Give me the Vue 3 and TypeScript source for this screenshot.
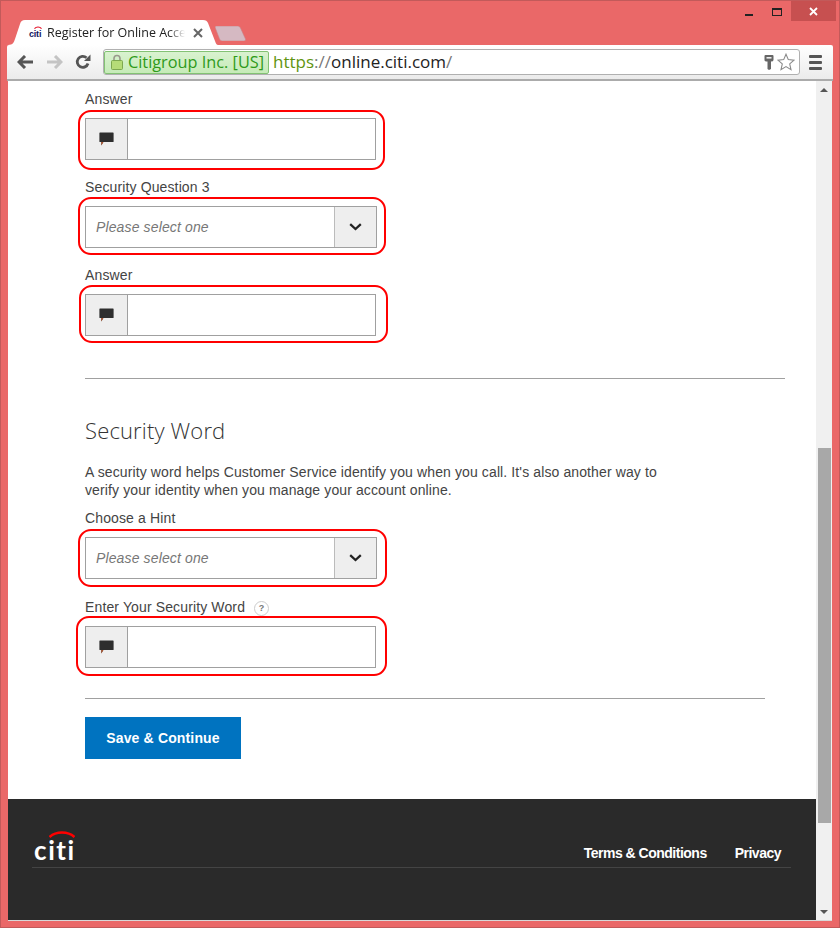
<script setup lang="ts">
interface Field {
  label: string
  kind: 'text' | 'select'
  ring: string
  help?: boolean
}
const upper: Field[] = [
  { label: 'Answer', kind: 'text', ring: 'ring-a' },
  { label: 'Security Question 3', kind: 'select', ring: 'ring-b' },
  { label: 'Answer', kind: 'text', ring: 'ring-c' },
]
const lower: Field[] = [
  { label: 'Choose a Hint', kind: 'select', ring: 'ring-d' },
  { label: 'Enter Your Security Word', kind: 'text', ring: 'ring-e', help: true },
]
</script>

<template>
  <div class="window">
    <div class="titlebar">
      <div class="tab">
        <svg class="tab-shape" width="210" height="25" viewBox="0 0 210 25"><path d="M0 25 C5 25 6 22 7 19 L12 4 C13 1 14 0 17 0 L195 0 C198 0 199 1 200 3 L207 21 C208 24 209 25 210 25 Z" fill="#fff"/></svg>
        <span class="favicon"><svg class="fav-arc" width="8" height="3" viewBox="0 0 8 3"><path d="M0.5 2.6 C2.5 0.4 5.5 0.4 7.5 2.6" fill="none" stroke="#e2001a" stroke-width="1.1"/></svg>citi</span>
        <span class="tab-title">Register for Online Acce</span>
        <svg class="tab-close" width="10" height="10" viewBox="0 0 10 10"><path d="M1 1 L9 9 M9 1 L1 9" stroke="#666" stroke-width="2"/></svg>
      </div>
      <svg class="newtab" width="31" height="15" viewBox="0 0 31 15"><path d="M1 0 H23 C24 0 25 1 25.5 2 L30.5 13 C31 14 30 15 29 15 H7 C6 15 5 14 4.5 13 L0.3 2 C0 1 0 0 1 0 Z" fill="#d5b9c2" stroke="#cd7f85" stroke-width="0.6"/></svg>
      <div class="controls">
        <span class="ctl"><i class="ctl-min"></i></span>
        <span class="ctl"><i class="ctl-max"></i></span>
        <span class="ctl ctl-close"><svg width="9" height="9" viewBox="0 0 9 9"><path d="M1 1 L8 8 M8 1 L1 8" stroke="#fff" stroke-width="1.8"/></svg></span>
      </div>
    </div>

    <div class="toolbar">
      <svg class="nav nav-back" width="17" height="14" viewBox="0 0 17 14"><path d="M8 1 L2 7 L8 13 M2 7 H16" fill="none" stroke="#555" stroke-width="3"/></svg>
      <svg class="nav nav-fwd" width="17" height="14" viewBox="0 0 17 14"><path d="M9 1 L15 7 L9 13 M15 7 H1" fill="none" stroke="#c4c4c4" stroke-width="3"/></svg>
      <svg class="nav nav-reload" width="16" height="16" viewBox="0 0 16 16"><path d="M13 9.5 A5.5 5.5 0 1 1 11.5 3.8" fill="none" stroke="#555" stroke-width="2.8"/><path d="M9 7 L15.5 7 L15.5 0.5 Z" fill="#555"/></svg>
      <div class="omnibox">
        <div class="ev">
          <svg width="12" height="16" viewBox="0 0 12 16"><path d="M3 7 V4.5 A3 3 0 0 1 9 4.5 V7" fill="none" stroke="#9a9a8c" stroke-width="1.6"/><rect x="0.5" y="6.5" width="11" height="9" rx="1" fill="#b5dc78" stroke="#7da850"/></svg>
          <span>Citigroup Inc. [US]</span>
        </div>
        <div class="url"><span class="scheme">https</span><span class="dim">://</span>online.citi.com<span class="dim">/</span></div>
        <svg class="key" width="10" height="15" viewBox="0 0 10 15"><path d="M0.5 1 Q0.5 0 1.5 0 H8.5 Q9.5 0 9.5 1 V5 Q9.5 6.5 7 6.5 V14 L5 15 L3.5 14 V6.5 Q0.5 6.5 0.5 5 Z" fill="#666"/><rect x="2.5" y="2" width="5" height="1.6" fill="#eee"/></svg>
        <svg class="star" width="18" height="18" viewBox="0 0 18 18"><path d="M9 1.2 L11.3 6.6 L17 7.1 L12.7 10.9 L14 16.6 L9 13.6 L4 16.6 L5.3 10.9 L1 7.1 L6.7 6.6 Z" fill="#fff" stroke="#8a8a8a" stroke-width="1.1"/></svg>
      </div>
      <div class="menu"><i></i><i></i><i></i></div>
    </div>

    <div class="viewport">
      <div class="page">
        <main class="form">
          <div v-for="(f, i) in upper" :key="i" class="group">
            <label class="label">{{ f.label }}</label>
            <div class="control" :class="f.kind">
              <template v-if="f.kind === 'text'">
                <span class="addon"><svg width="15" height="14" viewBox="0 0 15 14"><path d="M1 0.5 H14 Q14.6 0.5 14.6 1 V9.5 Q14.6 10 14 10 H4.4 L2.3 13.4 L2.4 10 H1 Q0.4 10 0.4 9.5 V1 Q0.4 0.5 1 0.5 Z" fill="#2e2e2e"/><path d="M2.4 10 H4.4 L2.3 13.4 Z" fill="#b5532a"/></svg></span>
                <span class="input"></span>
              </template>
              <template v-else>
                <span class="placeholder">Please select one</span>
                <span class="arrow"><svg width="13" height="8" viewBox="0 0 13 8"><path d="M1.2 1.2 L6.5 6 L11.8 1.2" fill="none" stroke="#222" stroke-width="2.3"/></svg></span>
              </template>
              <span class="ring" :class="f.ring"></span>
            </div>
          </div>

          <hr class="rule rule-wide" />

          <h2 class="heading">Security Word</h2>
          <p class="intro">A security word helps Customer Service identify you when you call. It's also another way to verify your identity when you manage your account online.</p>

          <div v-for="(f, i) in lower" :key="i" class="group">
            <label class="label" :class="{ 'label-help': f.help }">{{ f.label }}<span v-if="f.help" class="help">?</span></label>
            <div class="control" :class="f.kind">
              <template v-if="f.kind === 'text'">
                <span class="addon"><svg width="15" height="14" viewBox="0 0 15 14"><path d="M1 0.5 H14 Q14.6 0.5 14.6 1 V9.5 Q14.6 10 14 10 H4.4 L2.3 13.4 L2.4 10 H1 Q0.4 10 0.4 9.5 V1 Q0.4 0.5 1 0.5 Z" fill="#2e2e2e"/><path d="M2.4 10 H4.4 L2.3 13.4 Z" fill="#b5532a"/></svg></span>
                <span class="input"></span>
              </template>
              <template v-else>
                <span class="placeholder">Please select one</span>
                <span class="arrow"><svg width="13" height="8" viewBox="0 0 13 8"><path d="M1.2 1.2 L6.5 6 L11.8 1.2" fill="none" stroke="#222" stroke-width="2.3"/></svg></span>
              </template>
              <span class="ring" :class="f.ring"></span>
            </div>
          </div>

          <hr class="rule rule-narrow" />
          <button class="save" type="button">Save &amp; Continue</button>
        </main>

        <footer class="footer">
          <div class="footer-row">
            <div class="logo">
              <svg class="logo-arc" width="26" height="8" viewBox="0 0 26 8"><path d="M0.5 7 C7 1 19 1 25.5 7" fill="none" stroke="#f00" stroke-width="2.6"/></svg>
              <span>citi</span>
            </div>
            <nav class="links"><a>Terms &amp; Conditions</a><a>Privacy</a></nav>
          </div>
        </footer>
      </div>

      <aside class="scrollbar">
        <span class="tri tri-up"></span>
        <div class="track"><div class="thumb"></div></div>
        <span class="tri tri-down"></span>
      </aside>
    </div>
    <div class="frame-bottom"></div>
  </div>
</template>

<style>
html, body { margin: 0; padding: 0; overflow: hidden; }
</style>

<style scoped>
.window {
  width: 840px;
  height: 928px;
  box-sizing: border-box;
  display: flex;
  flex-direction: column;
  background: #ea6868;
  border: 1px solid #c25a5a;
  font-family: "Liberation Sans", Arial, sans-serif;
  overflow: hidden;
}
.titlebar {
  height: 44px;
  flex: none;
  display: flex;
  align-items: flex-start;
  padding-left: 7px;
  position: relative;
}
.tab {
  position: relative;
  width: 210px;
  height: 25px;
  margin-top: 19px;
  flex: none;
  display: flex;
  align-items: center;
}
.tab-shape { position: absolute; left: 0; top: 0; }
.favicon {
  position: relative;
  margin-left: 21px;
  width: 14px;
  font: bold 9px/10px "Liberation Sans", sans-serif;
  color: #12145e;
  padding-top: 2px;
  letter-spacing: -0.2px;
}
.fav-arc { position: absolute; left: 5px; top: -1px; }
.tab-title {
  position: relative;
  margin-left: 4px;
  width: 138px;
  overflow: hidden;
  white-space: nowrap;
  font: 12.5px/16px "Open Sans", sans-serif;
  color: #222;
  -webkit-mask-image: linear-gradient(to right, #000 88%, transparent);
  mask-image: linear-gradient(to right, #000 88%, transparent);
}
.tab-close { position: relative; margin-left: 8px; }
.newtab { margin-top: 25px; margin-left: -3px; }
.controls { margin-left: auto; margin-right: 3px; display: flex; height: 20px; }
.ctl { width: 27px; display: flex; align-items: center; justify-content: center; }
.ctl-close { width: 45px; background: #c75050; margin-left: 1px; }
.ctl-min { width: 8px; height: 2px; background: #222; margin-top: 8px; margin-left: -2px; }
.ctl-max { width: 8px; height: 5px; border: 1px solid #222; border-top-width: 2px; margin-top: 2px; display: block; }

.toolbar {
  margin: 0 6px;
  height: 36px;
  flex: none;
  box-sizing: border-box;
  display: flex;
  align-items: center;
  background: linear-gradient(#ffffff, #ebebeb);
  border-bottom: 2px solid #ababab;
  border-radius: 2px 2px 0 0;
}
.nav { flex: none; }
.nav-back { margin-left: 10px; }
.nav-fwd { margin-left: 12px; }
.nav-reload { margin-left: 12px; margin-top: -1px; }
.omnibox {
  margin-left: 12px;
  width: 697px;
  height: 26px;
  box-sizing: border-box;
  flex: none;
  display: flex;
  align-items: center;
  background: #fff;
  border: 1px solid #b0b0b0;
  border-radius: 3px;
  position: relative;
}
.ev {
  height: 23px;
  width: 165px;
  box-sizing: border-box;
  display: flex;
  align-items: center;
  gap: 5px;
  padding-left: 6px;
  border: 1px solid #83c274;
  border-radius: 2px;
  background: linear-gradient(#d9f2cf, #c6ebb8);
  color: #2f9a1a;
  font: 16.3px/20px "Open Sans", sans-serif;
  white-space: nowrap;
  flex: none;
}
.url {
  margin-left: 4px;
  font: 17px/22px "Open Sans", sans-serif;
  color: #222;
  white-space: nowrap;
}
.scheme { color: #5f9410; }
.dim { color: #777; }
.key { margin-left: auto; }
.star { margin-left: 3px; margin-right: 4px; }
.menu { margin-left: 9px; width: 13px; display: flex; flex-direction: column; gap: 3px; }
.menu i { height: 3px; background: #555; border-radius: 1px; display: block; }

.viewport {
  margin: 0 7px;
  flex: 1;
  min-height: 0;
  display: flex;
  background: #fff;
}
.page { flex: 1; min-width: 0; display: flex; flex-direction: column; }
.form { flex: 1; padding: 9px 0 0 77px; }
.group { margin-bottom: 18px; width: 292px; }
.label {
  display: block;
  font-size: 14px;
  line-height: 18px;
  letter-spacing: 0.13px;
  color: #444;
  margin-bottom: 10px;
  white-space: nowrap;
}
.label-help { padding-top: 1px; }
.control {
  position: relative;
  height: 42px;
  box-sizing: border-box;
  display: flex;
  background: #fff;
  border: 1px solid #a0a0a0;
}
.control.text { width: 291px; }
.addon {
  width: 41px;
  flex: none;
  background: #eeeeee;
  border-right: 1px solid #a0a0a0;
  box-sizing: content-box;
  display: flex;
  align-items: center;
  justify-content: center;
}
.input { flex: 1; }
.placeholder {
  flex: 1;
  align-self: center;
  padding-left: 10px;
  font-size: 14px;
  letter-spacing: 0.13px;
  font-style: italic;
  color: #777;
}
.arrow {
  width: 41px;
  flex: none;
  background: #eeeeee;
  border-left: 1px solid #bbb;
  display: flex;
  align-items: center;
  justify-content: center;
}
.ring {
  position: absolute;
  border: 2px solid #f00;
  border-radius: 13px;
  pointer-events: none;
}
.ring-a { left: -8px; right: -10px; top: -9px; bottom: -11px; }
.ring-b { left: -8px; right: -10px; top: -10px; bottom: -8px; }
.ring-c { left: -7px; right: -13px; top: -10px; bottom: -8px; }
.ring-d { left: -8px; right: -11px; top: -9px; bottom: -9px; }
.ring-e { left: -10px; right: -12px; top: -11px; bottom: -9px; }
.rule { border: 0; height: 1px; background: #a0a0a0; margin: 0; }
.rule-wide { width: 700px; margin-top: 42px; }
.heading {
  margin: 39px 0 0;
  font: 300 22px/24px "Open Sans", sans-serif;
  letter-spacing: 0.15px;
  color: #333;
}
.intro {
  margin: 21px 0 10px;
  width: 600px;
  font-size: 14px;
  line-height: 18px;
  letter-spacing: 0.115px;
  color: #444;
}
.help {
  display: inline-flex;
  align-items: center;
  justify-content: center;
  width: 13px;
  height: 13px;
  margin-left: 9px;
  border: 1px solid #ccc;
  border-radius: 50%;
  font-size: 9px;
  font-weight: bold;
  color: #777;
  vertical-align: 1px;
}
.rule-narrow { width: 680px; margin-top: 30px; }
.save {
  display: block;
  margin-top: 18px;
  width: 156px;
  height: 42px;
  border: 0;
  padding: 0;
  background: #0073c0;
  color: #fff;
  font: bold 14px "Liberation Sans", sans-serif;
  letter-spacing: 0.15px;
}
.footer {
  height: 121px;
  flex: none;
  background: #2a2a2a;
  padding: 0 25px 0 24px;
  box-sizing: border-box;
}
.footer-row {
  height: 69px;
  box-sizing: border-box;
  display: flex;
  justify-content: space-between;
  align-items: flex-end;
  border-bottom: 1px solid #444;
  padding-bottom: 5px;
}
.logo {
  position: relative;
  margin-left: 2px;
  margin-bottom: 0;
  color: #fff;
  font: 700 26px/24px "Lato", sans-serif;
  letter-spacing: 1.6px;
}
.logo-arc { position: absolute; left: 15px; top: -8px; }
.links { display: flex; gap: 28px; margin-right: 10px; }
.links a { color: #fff; font-size: 14px; font-weight: bold; line-height: 18px; letter-spacing: -0.5px; }

.scrollbar {
  width: 16px;
  flex: none;
  display: flex;
  flex-direction: column;
  align-items: center;
  background: #f0f0f0;
}
.track { flex: 1; width: 100%; display: flex; flex-direction: column; justify-content: flex-end; }
.thumb { width: 13px; height: 375px; margin: 0 auto 87px; background: #a8a8a8; }
.tri { width: 0; height: 0; border-left: 4px solid transparent; border-right: 4px solid transparent; flex: none; }
.tri-up { border-bottom: 4px solid #555; margin-top: 7px; }
.tri-down { border-top: 4px solid #555; margin-bottom: 6px; }
.frame-bottom { height: 7px; flex: none; border-top: 1px solid #d8d8d8; margin: 0 7px; box-sizing: border-box; }
</style>
